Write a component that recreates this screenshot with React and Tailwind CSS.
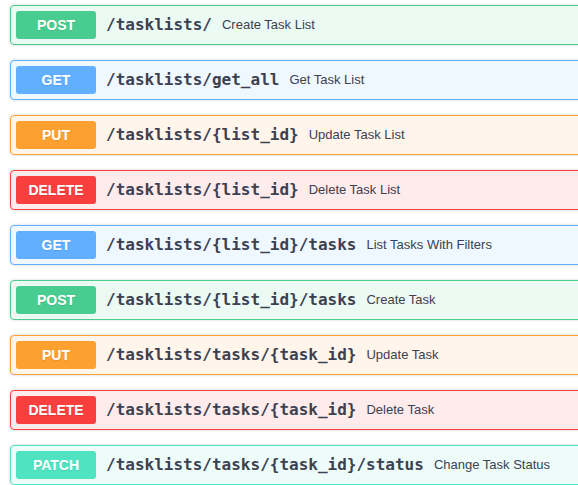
import React from 'react';

const METHODS = {
  POST: { box: 'border-[#49cc90] bg-[#49cc90]/10', badge: 'bg-[#49cc90]' },
  GET: { box: 'border-[#61affe] bg-[#61affe]/10', badge: 'bg-[#61affe]' },
  PUT: { box: 'border-[#fca130] bg-[#fca130]/10', badge: 'bg-[#fca130]' },
  DELETE: { box: 'border-[#f93e3e] bg-[#f93e3e]/10', badge: 'bg-[#f93e3e]' },
  PATCH: { box: 'border-[#50e3c2] bg-[#50e3c2]/10', badge: 'bg-[#50e3c2]' },
};

const endpoints = [
  { method: 'POST', path: '/tasklists/', summary: 'Create Task List' },
  { method: 'GET', path: '/tasklists/get_all', summary: 'Get Task List' },
  { method: 'PUT', path: '/tasklists/{list_id}', summary: 'Update Task List' },
  { method: 'DELETE', path: '/tasklists/{list_id}', summary: 'Delete Task List' },
  { method: 'GET', path: '/tasklists/{list_id}/tasks', summary: 'List Tasks With Filters' },
  { method: 'POST', path: '/tasklists/{list_id}/tasks', summary: 'Create Task' },
  { method: 'PUT', path: '/tasklists/tasks/{task_id}', summary: 'Update Task' },
  { method: 'DELETE', path: '/tasklists/tasks/{task_id}', summary: 'Delete Task' },
  { method: 'PATCH', path: '/tasklists/tasks/{task_id}/status', summary: 'Change Task Status' },
];

function OpBlock({ method, path, summary }) {
  const m = METHODS[method];
  return (
    <div className={`mb-[15px] w-[600px] rounded-[4px] border shadow-[0_0_3px_rgba(0,0,0,0.19)] ${m.box}`}>
      <div className="flex items-center p-[5px]">
        <span
          className={`w-[80px] shrink-0 rounded-[3px] py-[6px] text-center text-[14px] font-bold leading-[16px] text-white [text-shadow:0_1px_0_rgba(0,0,0,0.1)] ${m.badge}`}
          style={{ fontFamily: '"Liberation Sans", Arial, sans-serif' }}
        >
          {method}
        </span>
        <span
          className="px-[10px] text-[16px] font-bold text-[#3b4151]"
          style={{ fontFamily: '"DejaVu Sans Mono", monospace' }}
        >
          {path}
        </span>
        <span
          className="text-[13px] text-[#3b4151]"
          style={{ fontFamily: '"Liberation Sans", Arial, sans-serif' }}
        >
          {summary}
        </span>
      </div>
    </div>
  );
}

export default function App() {
  return (
    <div className="h-[485px] w-[578px] overflow-hidden bg-white pl-[10px] pt-[5px]">
      {endpoints.map((e, i) => (
        <OpBlock key={i} {...e} />
      ))}
    </div>
  );
}
